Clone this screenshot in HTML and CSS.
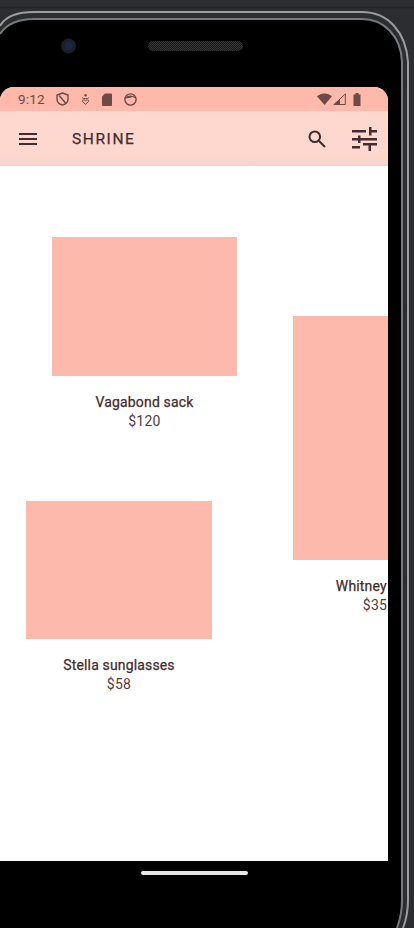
FILE: index.html
```html
<!DOCTYPE html>
<html lang="en">
<head>
<meta charset="utf-8">
<title>Shrine</title>
<link rel="stylesheet" href="styles.css">
</head>
<body>
<div class="device">
  <svg class="bezel" width="414" height="928" viewBox="0 0 414 928" aria-hidden="true">
    <defs>
      <pattern id="mesh" width="2" height="2" patternUnits="userSpaceOnUse">
        <rect class="mesh-dark" width="2" height="2"/>
        <rect class="mesh-dot" width="1" height="1"/>
        <rect class="mesh-dot" x="1" y="1" width="1" height="1"/>
      </pattern>
    </defs>
    <path class="bezel-body" d="M0 928V0H414V928Z"/>
    <path class="bezel-seam" d="M0 7.500H414"/>
    <path class="bezel-black" d="M0 928V34Q10 19 34 19H362C384 19 401 36 402 62V900Q402 915 397 928Z"/>
    <path class="bezel-outer" d="M0 26Q8 12 34 12H362C388 12 406 32 408 62V900Q408 915 403 928"/>
    <path class="bezel-inner" d="M0 34Q10 19 34 19H362C384 19 401 36 402 62V900Q402 915 397 928"/>
    <circle class="camera-ring" cx="68.500" cy="46" r="7.500"/>
    <circle class="camera-lens" cx="68.500" cy="46" r="4"/>
    <rect x="148" y="41" width="95" height="10" rx="5" fill="url(#mesh)"/>
  </svg>
  <div class="screen">
    <div class="status-bar">
      <span class="time">9:12</span>
      <svg class="status-icon shield" width="13" height="14" viewBox="0 0 13 14"><path class="line" d="M6.500 1 12 3V7C12 10 9.500 12.300 6.500 13 3.500 12.300 1 10 1 7V3ZM3.200 3.500 9.500 11"/></svg>
      <svg class="status-icon" width="9" height="11" viewBox="0 0 9 11"><circle class="fill" cx="4.500" cy="1.300" r="1.200"/><path class="line-thin" d="M1.200 3.800C2.500 5 6.500 5 7.800 3.800M4.500 10.300 1.300 7.300C.6 5.800 3.300 5.300 4.500 6.800 5.700 5.300 8.400 5.800 7.700 7.300Z"/></svg>
      <svg class="status-icon" width="10" height="13" viewBox="0 0 10 13"><path class="fill" d="M3 .5H9A1 1 0 0 1 10 1.500V12A1 1 0 0 1 9 13H1A1 1 0 0 1 0 12V3.500Z"/></svg>
      <svg class="status-icon" width="13" height="13" viewBox="0 0 13 13"><circle class="line" cx="6.500" cy="6.500" r="5.600"/><path class="fill" d="M1.300 5.500C2.500 1.500 10.500 1.500 11.700 5.500 10 5 9 4.300 8.500 3.800 7 5 3.500 5.300 1.300 5.500Z"/></svg>
      <span class="spacer"></span>
      <svg class="status-icon wifi" width="15" height="12" viewBox="0 0 15 12"><path class="fill" d="M0 3.300C4-.6 11-.6 15 3.300L7.500 12Z"/></svg>
      <svg class="status-icon signal" width="13" height="12" viewBox="0 0 13 12"><path class="line-thin" d="M12.300 .9V11.500H1.200Z"/><path class="fill" d="M7 6V12H0Z"/></svg>
      <svg class="status-icon" width="8" height="13" viewBox="0 0 8 13"><path class="fill" d="M2.500 0H5.500V1.500H7.500V13H.5V1.500H2.500Z"/></svg>
    </div>
    <header class="app-bar">
      <svg class="menu-icon" width="18" height="12" viewBox="0 0 18 12"><path class="bar" d="M0 0H18V2H0ZM0 5H18V7H0ZM0 10H18V12H0Z"/></svg>
      <h1 class="title">SHRINE</h1>
      <span class="spacer"></span>
      <svg class="search-icon" width="18" height="18" viewBox="0 0 18 18"><circle class="stroke" cx="6.800" cy="6.800" r="5.300"/><path class="stroke" d="M10.800 10.800 17 17"/></svg>
      <svg class="tune-icon" width="25" height="24" viewBox="0 0 25 24"><path class="bar" d="M0 3H14V5.500H0ZM17 0H19.500V3H25V5.500H19.500V8.500H17ZM6 8.500H8.500V11H25V13.500H8.500V16H6V13.500H0V11H6ZM0 19H8V21.500H0ZM11 16H25V18.500H19V24H16.500V18.500H11Z"/></svg>
    </header>
    <main class="content">
      <div class="column column-left">
        <article class="product product-sack">
          <div class="photo photo-sack"></div>
          <h2 class="name">Vagabond sack</h2>
          <p class="price">$120</p>
        </article>
        <article class="product product-glasses">
          <div class="photo photo-glasses"></div>
          <h2 class="name">Stella sunglasses</h2>
          <p class="price">$58</p>
        </article>
      </div>
      <div class="column column-right">
        <article class="product product-belt">
          <div class="photo photo-portrait"></div>
          <h2 class="name">Whitney belt</h2>
          <p class="price">$35</p>
        </article>
      </div>
    </main>
  </div>
  <div class="home-indicator"></div>
</div>
</body>
</html>
```

FILE: styles.css
```css
* { box-sizing: border-box; }
html, body { margin: 0; height: 100%; background: #000; overflow: hidden; }
body { font-family: Roboto, "Liberation Sans", sans-serif; color: #442b2d; }

.device {
  position: relative;
  width: 414px;
  height: 928px;
  padding-top: 87px;
  overflow: hidden;
}
.bezel { position: absolute; inset: 0; }
.bezel-body { fill: #2b2d30; }
.bezel-seam { fill: none; stroke: #222427; stroke-width: 1.500; }
.bezel-black { fill: #000; }
.bezel-outer { fill: none; stroke: #9a9c9f; stroke-width: 2; }
.bezel-inner { fill: none; stroke: #77797c; stroke-width: 2; }
.camera-ring { fill: #1d1f22; }
.camera-lens { fill: #18264f; }
.mesh-dark { fill: #141414; }
.mesh-dot { fill: #3a3a3a; }

.screen {
  position: relative;
  width: 388px;
  height: 774px;
  background: #fff;
  border-radius: 14px 14px 0 0;
  overflow: hidden;
}
.status-bar {
  display: flex;
  align-items: center;
  gap: 12px;
  height: 24px;
  padding: 0 27px 0 18px;
  background: #feb9ab;
  color: #6b4a47;
  font-size: 13.500px;
}
.time { letter-spacing: .2px; }
.status-icon { display: block; flex: none; }
.shield { margin-left: -1px; }
.wifi { margin-right: -11px; }
.signal { margin-right: -5px; }
.fill { fill: #6b4a47; }
.line { fill: none; stroke: #6b4a47; stroke-width: 1.400; }
.line-thin { fill: none; stroke: #6b4a47; stroke-width: 1; }
.spacer { flex: 1; }

.app-bar {
  display: flex;
  align-items: center;
  height: 55px;
  padding: 0 11px 0 19px;
  background: linear-gradient(#fed8cf 85%, #f3d2ca);
}
.menu-icon { flex: none; }
.title {
  margin: 0 0 0 35px;
  font-size: 15.500px;
  font-weight: 400;
  letter-spacing: 1.600px;
  -webkit-text-stroke: .25px #442b2d;
}
.search-icon { flex: none; margin-right: 26px; }
.tune-icon { flex: none; }
.bar { fill: #442b2d; }
.stroke { fill: none; stroke: #442b2d; stroke-width: 2; }

.content {
  display: flex;
  height: 695px;
  background: #fff;
  overflow: hidden;
}
.column { display: flex; flex-direction: column; flex: none; }
.column-left { width: 293px; }
.column-right { padding-top: 150px; }
.product { width: 186px; text-align: center; }
.product-sack { width: 185px; margin: 71px 0 0 52px; }
.product-glasses { margin: 71px 0 0 26px; }
.product-belt { width: 164px; }
.photo { background: #fdb9ab; }
.photo-sack { height: 139px; }
.photo-glasses { height: 138px; }
.photo-portrait { height: 244px; }
.name {
  margin: 17px 0 0;
  font-size: 14px;
  line-height: 18px;
  font-weight: 400;
  letter-spacing: .15px;
  white-space: nowrap;
  -webkit-text-stroke: .25px #442b2d;
}
.price {
  margin: 1px 0 0;
  font-size: 14px;
  line-height: 18px;
  letter-spacing: .25px;
  color: #553c3e;
}
.home-indicator {
  position: relative;
  width: 107px;
  height: 4px;
  margin: 10px 0 0 140.500px;
  border-radius: 2px;
  background: #e8e8e8;
}
```
